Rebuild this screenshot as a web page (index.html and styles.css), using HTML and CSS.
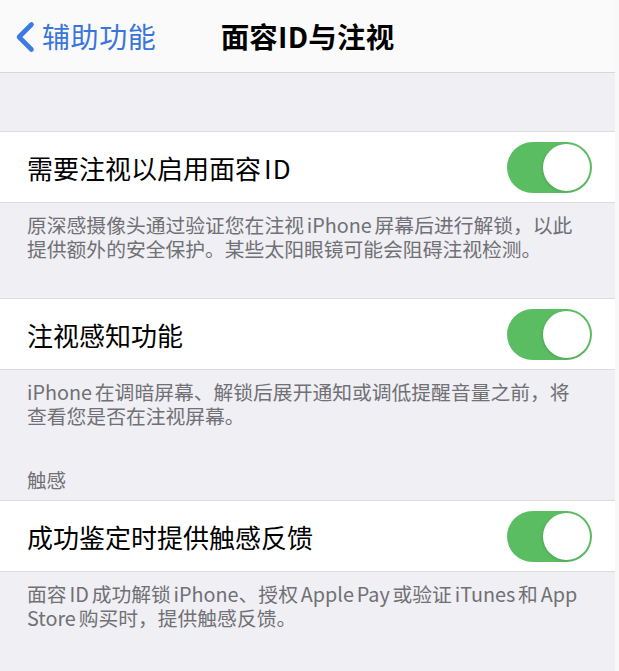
FILE: index.html
```html
<!DOCTYPE html>
<html lang="zh-CN">
<head>
<meta charset="utf-8">
<title>面容ID与注视</title>
<link rel="stylesheet" href="styles.css">
</head>
<body>
<div class="screen">
  <header class="navbar">
    <a class="back" href="#">
      <svg class="chevron" viewBox="0 0 22 32" width="22" height="32" aria-hidden="true">
        <path d="M17.5 3.5 L5 16 L17.5 28.5" fill="none" stroke="currentColor" stroke-width="4.6" stroke-linecap="round" stroke-linejoin="round"/>
      </svg>
      <span>辅助功能</span>
    </a>
    <h1 class="title">面容ID与注视</h1>
    <span></span>
  </header>

  <section class="section first">
    <div class="group">
      <div class="row">
        <span class="label">需要注视以启用面容<span class="latin">ID</span></span>
        <span class="switch on"><span class="knob"></span></span>
      </div>
    </div>
    <p class="footer"><span class="line">原深感摄像头通过验证您在注视 iPhone 屏幕后进行解锁，以此</span><span class="line">提供额外的安全保护。某些太阳眼镜可能会阻碍注视检测。</span></p>
  </section>

  <section class="section">
    <div class="group">
      <div class="row">
        <span class="label">注视感知功能</span>
        <span class="switch on"><span class="knob"></span></span>
      </div>
    </div>
    <p class="footer"><span class="line">iPhone 在调暗屏幕、解锁后展开通知或调低提醒音量之前，将</span><span class="line">查看您是否在注视屏幕。</span></p>
  </section>

  <section class="section">
    <h2 class="header">触感</h2>
    <div class="group">
      <div class="row">
        <span class="label">成功鉴定时提供触感反馈</span>
        <span class="switch on"><span class="knob"></span></span>
      </div>
    </div>
    <p class="footer"><span class="line">面容 ID 成功解锁 iPhone、授权 Apple Pay 或验证 iTunes 和 App</span><span class="line">Store 购买时，提供触感反馈。</span></p>
  </section>
</div>
</body>
</html>
```

FILE: styles.css
```css
html {
  background: #f8f8f9;
}

body {
  margin: 0;
  font-family: "Noto Sans CJK SC", "Noto Sans", sans-serif;
  color: #000;
}

.screen {
  width: 615px;
  min-height: 671px;
  background: #efeff4;
}

/* navigation bar */
.navbar {
  height: 72px;
  background: #fafafa;
  border-bottom: 1px solid #d7d7db;
  display: grid;
  grid-template-columns: 1fr auto 1fr;
  align-items: center;
}

.back {
  display: flex;
  align-items: center;
  gap: 6px;
  padding-left: 14px;
  color: #3a76da;
  text-decoration: none;
  font-size: 28px;
  letter-spacing: 0.6px;
  line-height: 1;
}

.chevron {
  display: block;
  color: #3b7be4;
  margin-top: 1px;
}

.title {
  margin: 0;
  font-size: 28.5px;
  font-weight: 700;
  line-height: 1;
  letter-spacing: 0.2px;
}

/* grouped list */
.section.first {
  padding-top: 58px;
}

.group {
  background: #fff;
  border-top: 1px solid #dcdce0;
  border-bottom: 1px solid #dcdce0;
}

.row {
  height: 70px;
  display: flex;
  align-items: center;
  justify-content: space-between;
  padding: 0 23px 0 27px;
}

.label {
  font-size: 26px;
  line-height: 1;
  margin-top: 2px;
}

.latin {
  margin-left: 3px;
  letter-spacing: 1px;
}

.footer {
  margin: 0;
  padding: 10px 27px 38px;
  font-size: 19.8px;
  line-height: 23.5px;
  color: #707075;
  white-space: nowrap;
  word-spacing: -1.6px;
}

.line {
  display: block;
  height: 23.5px;
}

.section:nth-of-type(2) .footer {
  padding-bottom: 0;
}

.header {
  margin: 0;
  padding: 41px 27px 8px;
  font-size: 19.5px;
  font-weight: 400;
  line-height: 24px;
  color: #707075;
}

/* toggle switch */
.switch {
  position: relative;
  width: 85px;
  height: 51px;
  border-radius: 26px;
  background: #5bbd62;
  flex: none;
}

.knob {
  position: absolute;
  top: 2px;
  right: 2px;
  width: 47px;
  height: 47px;
  border-radius: 50%;
  background: #fff;
  box-shadow: -1px 1px 3px rgba(0, 0, 0, 0.12);
}
```
